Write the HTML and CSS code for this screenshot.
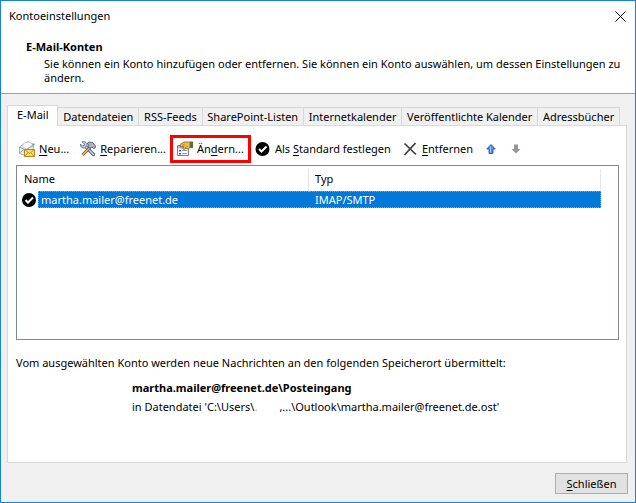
FILE: index.html
```html
<!DOCTYPE html>
<html lang="de">
<head>
    <meta charset="UTF-8">
    <meta name="viewport" content="width=device-width, initial-scale=1.0">
    <title>Kontoeinstellungen</title>
    <link rel="stylesheet" href="styles.css">
</head>
<body>
    <div class="dialog">
        <header class="header">
            <div class="titlebar">
                <h1>Kontoeinstellungen</h1>
                <button class="close" aria-label="Fenster schließen">
                    <svg width="11" height="11" viewBox="0 0 11 11"><path d="M.5 .5l10 10M10.500 .5l-10 10" stroke="#000" fill="none"/></svg>
                </button>
            </div>
            <div class="intro">
                <h2>E-Mail-Konten</h2>
                <p>Sie können ein Konto hinzufügen oder entfernen. Sie können ein Konto auswählen, um dessen Einstellungen zu ändern.</p>
            </div>
        </header>

        <main class="content">
            <div class="tabs" role="tablist">
                <button class="tab active" role="tab" aria-selected="true">E-Mail</button>
                <button class="tab" role="tab">Datendateien</button>
                <button class="tab" role="tab">RSS-Feeds</button>
                <button class="tab" role="tab">SharePoint-Listen</button>
                <button class="tab" role="tab">Internetkalender</button>
                <button class="tab" role="tab">Veröffentlichte Kalender</button>
                <button class="tab" role="tab">Adressbücher</button>
            </div>

            <section class="panel">
                <div class="toolbar">
                    <button class="tool">
                        <svg width="16" height="16" viewBox="0 0 16 16">
                            <path d="M.5 6L4 3.500l5-3 5.500 3V10L6 14.500l-5.500-2z" fill="#e4ebf3" stroke="#8f9db0" stroke-width=".8"/>
                            <path d="M3.500 5.500L5 2l6-1 2.500 3-6 4z" fill="#fff" stroke="#b4bfcc" stroke-width=".7"/>
                            <path d="M.5 6l6 3 8-4.500M.5 12l4.500-3.500" fill="none" stroke="#8795a8" stroke-width=".8"/>
                            <path d="M13.500 2.500h2v2h-2z" fill="#46b24c"/>
                            <path d="M5.500 8.500h10v7h-10z" fill="#ffdb62" stroke="#b8861a"/>
                            <path d="M6 9l4.500 3.500L15 9M6 15l3-3M15 15l-3-3" fill="none" stroke="#b98118" stroke-width=".8"/>
                        </svg>
                        <span><u>N</u>eu...</span>
                    </button>
                    <button class="tool">
                        <svg width="16" height="16" viewBox="0 0 16 16">
                            <path d="M5 5l8.500 8.500" stroke="#4f607a" stroke-width="3.200" stroke-linecap="round"/>
                            <path d="M5 5l8.500 8.500" stroke="#c9d8ec" stroke-width="1.500" stroke-linecap="round"/>
                            <path d="M2 .8l2.500 2.200-.5 1.500-1.500.5L.5 3C0 6 2 7.500 4.500 7L7 4.500C7.500 2 5 0 2 .8z" fill="#bdcce0" stroke="#5d6f8a" stroke-width=".8"/>
                            <path d="M10 6.500L2.500 14" stroke="#71502a" stroke-width="3"/>
                            <path d="M10 6.500L2.500 14" stroke="#f0bd6c" stroke-width="1.400"/>
                            <path d="M7 2.500l2-1.500 3.500.5 3 3.500-.5 2-1.500.5-1.500-1.500-2 1.500-1.500-2 .5-1.500z" fill="#a6b7cf" stroke="#47566e" stroke-width=".9"/>
                        </svg>
                        <span><u>R</u>eparieren...</span>
                    </button>
                    <button class="tool highlight">
                        <svg width="16" height="16" viewBox="0 0 16 16">
                            <path d="M.5 4.500h11v10H.5z" fill="#fff" stroke="#6683ae"/>
                            <path d="M1 5h10v2.500H1z" fill="#a3bce0"/>
                            <path d="M2 9h2v1.500H2zM2 12h2v1.500H2z" fill="#2c63b0"/>
                            <path d="M5 9.500h5M5 12.500h5" stroke="#8698b3"/>
                            <path d="M3 3.500l4-2.500h6v5.500l-2 1.500-2.500-.5-1.500 1-1.500-1 1.500-2L3.500 6z" fill="#edbc4e" stroke="#8b621c" stroke-width=".8"/>
                            <path d="M5 4.500l3-1.500M8 7l3-2" stroke="#a6741f" stroke-width=".7"/>
                            <path d="M13 .5h3v6.500h-3z" fill="#5b6d39"/>
                        </svg>
                        <span>Än<u>d</u>ern...</span>
                    </button>
                    <button class="tool">
                        <svg width="16" height="16" viewBox="0 0 16 16"><circle cx="7.500" cy="8" r="7" fill="#000"/><path d="M4 8l2.500 2.500 5-5" fill="none" stroke="#fff" stroke-width="2"/></svg>
                        <span>Als <u>S</u>tandard festlegen</span>
                    </button>
                    <button class="tool">
                        <svg width="16" height="16" viewBox="0 0 16 16"><path d="M2.500 2.500l11.500 11M13.500 2L2.500 14" fill="none" stroke="#3b3b3b" stroke-width="1.700"/></svg>
                        <span><u>E</u>ntfernen</span>
                    </button>
                    <button class="tool arrow" aria-label="Nach oben">
                        <svg width="10" height="10" viewBox="0 0 10 10"><path d="M5 .5l4.300 4.500H7v4.500H3V5H.7z" fill="#4b8df0" stroke="#2855b5" stroke-width=".9"/><path d="M4.500 2.500v6" stroke="#9cc6ff"/></svg>
                    </button>
                    <button class="tool arrow" aria-label="Nach unten" disabled>
                        <svg width="10" height="10" viewBox="0 0 10 10"><path d="M5 9.500L.5 5H3V.5h4V5h2.500z" fill="#969696"/></svg>
                    </button>
                </div>

                <div class="list">
                    <table>
                        <colgroup>
                            <col class="col-mark">
                            <col class="col-name">
                            <col>
                        </colgroup>
                        <thead>
                            <tr><th colspan="2">Name</th><th>Typ</th></tr>
                        </thead>
                        <tbody>
                            <tr class="selected">
                                <td class="mark">
                                    <svg width="14" height="14" viewBox="0 0 14 14"><circle cx="7" cy="7" r="7" fill="#000"/><path d="M3.500 7L6 9.500l5-5" fill="none" stroke="#fff" stroke-width="2"/></svg>
                                </td>
                                <td class="name">martha.mailer@freenet.de</td>
                                <td>IMAP/SMTP</td>
                            </tr>
                        </tbody>
                    </table>
                </div>

                <p class="note">Vom ausgewählten Konto werden neue Nachrichten an den folgenden Speicherort übermittelt:</p>
                <div class="location">
                    <strong>martha.mailer@freenet.de\Posteingang</strong>
                    <span>in Datendatei 'C:\Users\<span class="redacted">.</span>,...\Outlook\martha.mailer@freenet.de.ost'</span>
                </div>
            </section>
        </main>

        <footer class="footer">
            <button class="btn"><u>S</u>chließen</button>
        </footer>
    </div>
</body>
</html>
```
FILE: styles.css
```css
* {
    box-sizing: border-box;
}

body {
    margin: 0;
    font-family: "Noto Sans", "Open Sans", sans-serif;
    font-size: 11px;
    line-height: 14px;
    color: #000;
}

h1, h2, p {
    margin: 0;
    font-size: 11px;
}

button {
    font: inherit;
    color: inherit;
    border: none;
    background: none;
    padding: 0;
}

u {
    text-underline-offset: 2px;
}

.dialog {
    display: flex;
    flex-direction: column;
    min-height: 100vh;
    background-color: #f0f0f0;
    border: 1px solid #1883d7;
}

.header {
    background-color: white;
    border-bottom: 1px solid #a0a0a0;
    padding-bottom: 8px;
}

.titlebar {
    display: flex;
    justify-content: space-between;
    align-items: center;
    height: 30px;
    padding: 0 9px 0 8px;
}

.titlebar h1 {
    font-weight: normal;
}

.close {
    display: flex;
}

.intro {
    padding: 9px 8px 0 25px;
}

.intro p {
    padding: 3px 0 0 18px;
}

.content {
    flex: 1;
    display: flex;
    flex-direction: column;
    padding: 11px 8px 0 6px;
}

.tabs {
    display: flex;
    align-items: flex-end;
    padding-right: 7px;
}

.tab {
    flex: 1 1 auto;
    height: 18px;
    border: 1px solid #d9d9d9;
    border-left: none;
    border-bottom: none;
    white-space: nowrap;
}

.tab.active {
    flex-grow: 0;
    height: 21px;
    margin-bottom: -1px;
    padding: 0 9px 2px;
    border-left: 1px solid #d9d9d9;
    background-color: white;
    position: relative;
}

.panel {
    flex: 1;
    background-color: white;
    border: 1px solid #d9d9d9;
    padding: 9px 7px 0 8px;
}

.toolbar {
    display: flex;
    align-items: center;
    gap: 11px;
    height: 28px;
    padding-left: 3px;
}

.tool {
    display: flex;
    align-items: center;
    gap: 4px;
    height: 14px;
    white-space: nowrap;
}

.highlight {
    outline: 3px solid #f00;
    outline-offset: 4px;
}

.arrow {
    padding: 0 2px;
}

.list {
    height: 175px;
    margin-top: 2px;
    padding: 3px 17px 0 1px;
    border: 1px solid #828790;
}

table {
    width: 100%;
    table-layout: fixed;
    border-collapse: separate;
    border-spacing: 0;
}

.col-mark {
    width: 20px;
}

.col-name {
    width: 271px;
}

th {
    height: 22px;
    padding: 0 6px 2px;
    text-align: left;
    font-weight: normal;
    border-right: 1px solid #e5e5e5;
}

td {
    height: 17px;
    padding: 0 6px;
}

td.mark {
    padding: 0 0 0 4px;
}

td.name {
    padding: 0 2px;
}

td svg {
    display: block;
}

.selected td:not(.mark) {
    color: white;
    background-color: #0078d7;
    border-top: 1px dotted #ff8728;
    border-bottom: 1px dotted #ff8728;
}

.selected td:last-child {
    border-right: 1px dotted #ff8728;
}

.selected td.name {
    border-left: 1px dotted #ff8728;
}

.note {
    margin-top: 16px;
}

.location {
    display: flex;
    flex-direction: column;
    gap: 5px;
    padding: 11px 0 0 116px;
}

.redacted {
    display: inline-block;
    width: 25px;
    color: #999;
}

.footer {
    display: flex;
    justify-content: flex-end;
    padding: 10px 7px 8px;
}

.btn {
    min-width: 73px;
    height: 21px;
    border: 1px solid #adadad;
    background-color: #e1e1e1;
}
```
